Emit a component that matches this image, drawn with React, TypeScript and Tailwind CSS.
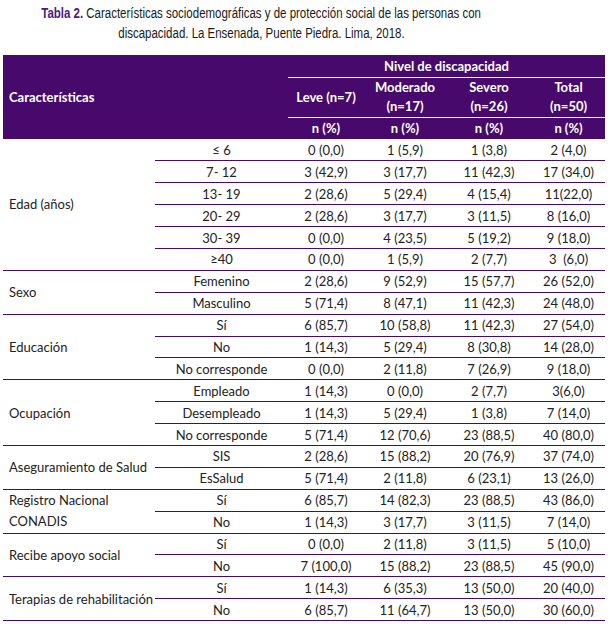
import React from "react";

type Row = { sub: string; vals: string[] };
type Group = { label: string; rows: Row[]; twoLine?: boolean };

const groups: Group[] = [
  {
    label: "Edad (años)",
    rows: [
      { sub: "≤ 6", vals: ["0 (0,0)", "1 (5,9)", "1 (3,8)", "2 (4,0)"] },
      { sub: "7- 12", vals: ["3 (42,9)", "3 (17,7)", "11 (42,3)", "17 (34,0)"] },
      { sub: "13- 19", vals: ["2 (28,6)", "5 (29,4)", "4 (15,4)", "11(22,0)"] },
      { sub: "20- 29", vals: ["2 (28,6)", "3 (17,7)", "3 (11,5)", "8 (16,0)"] },
      { sub: "30- 39", vals: ["0 (0,0)", "4 (23,5)", "5 (19,2)", "9 (18,0)"] },
      { sub: "≥40", vals: ["0 (0,0)", "1 (5,9)", "2 (7,7)", "3  (6,0)"] },
    ],
  },
  {
    label: "Sexo",
    rows: [
      { sub: "Femenino", vals: ["2 (28,6)", "9 (52,9)", "15 (57,7)", "26 (52,0)"] },
      { sub: "Masculino", vals: ["5 (71,4)", "8 (47,1)", "11 (42,3)", "24 (48,0)"] },
    ],
  },
  {
    label: "Educación",
    rows: [
      { sub: "Sí", vals: ["6 (85,7)", "10 (58,8)", "11 (42,3)", "27 (54,0)"] },
      { sub: "No", vals: ["1 (14,3)", "5 (29,4)", "8 (30,8)", "14 (28,0)"] },
      { sub: "No corresponde", vals: ["0 (0,0)", "2 (11,8)", "7 (26,9)", "9 (18,0)"] },
    ],
  },
  {
    label: "Ocupación",
    rows: [
      { sub: "Empleado", vals: ["1 (14,3)", "0 (0,0)", "2 (7,7)", "3(6,0)"] },
      { sub: "Desempleado", vals: ["1 (14,3)", "5 (29,4)", "1 (3,8)", "7 (14,0)"] },
      { sub: "No corresponde", vals: ["5 (71,4)", "12 (70,6)", "23 (88,5)", "40 (80,0)"] },
    ],
  },
  {
    label: "Aseguramiento de Salud",
    rows: [
      { sub: "SIS", vals: ["2 (28,6)", "15 (88,2)", "20 (76,9)", "37 (74,0)"] },
      { sub: "EsSalud", vals: ["5 (71,4)", "2 (11,8)", "6 (23,1)", "13 (26,0)"] },
    ],
  },
  {
    label: "Registro Nacional CONADIS",
    twoLine: true,
    rows: [
      { sub: "Sí", vals: ["6 (85,7)", "14 (82,3)", "23 (88,5)", "43 (86,0)"] },
      { sub: "No", vals: ["1 (14,3)", "3 (17,7)", "3 (11,5)", "7 (14,0)"] },
    ],
  },
  {
    label: "Recibe apoyo social",
    rows: [
      { sub: "Sí", vals: ["0 (0,0)", "2 (11,8)", "3 (11,5)", "5 (10,0)"] },
      { sub: "No", vals: ["7 (100,0)", "15 (88,2)", "23 (88,5)", "45 (90,0)"] },
    ],
  },
  {
    label: "Terapias de rehabilitación",
    rows: [
      { sub: "Sí", vals: ["1 (14,3)", "6 (35,3)", "13 (50,0)", "20 (40,0)"] },
      { sub: "No", vals: ["6 (85,7)", "11 (64,7)", "13 (50,0)", "30 (60,0)"] },
    ],
  },
];

export default function App() {
  return (
    <div className="w-[613px] h-[624px] bg-white overflow-hidden text-[#222]">
      <div
        className="w-[522px] pt-[3px] flex flex-col items-center text-[15.5px] leading-[20px] text-[#1a1a1a]"
        style={{ fontFamily: '"Liberation Sans", Arial, sans-serif' }}
      >
        <div className="whitespace-nowrap scale-x-[0.74] origin-center">
          <span className="font-bold text-[#4b1a7e]">Tabla 2.</span> Características sociodemográficas y de
          protección social de las personas con
        </div>
        <div className="whitespace-nowrap scale-x-[0.74] origin-center">
          discapacidad. La Ensenada, Puente Piedra. Lima, 2018.
        </div>
      </div>
      <div className="pl-[3px] pt-[12px]">
        <table
          className="table-fixed border-collapse w-[602px] text-[13px] leading-[16px]"
          style={{ fontFamily: 'Lato, "Open Sans", sans-serif' }}
        >
          <colgroup>
            <col className="w-[152px]" />
            <col className="w-[133px]" />
            <col className="w-[76px]" />
            <col className="w-[82px]" />
            <col className="w-[86px]" />
            <col className="w-[73px]" />
          </colgroup>
          <thead className="bg-[#48096d] text-white font-bold">
            <tr className="h-[22px]">
              <th colSpan={2} rowSpan={3} className="text-left align-middle pl-[6px] font-bold">
                Características
              </th>
              <th colSpan={4} className="text-center border-b border-white p-0 font-bold">
                Nivel de discapacidad
              </th>
            </tr>
            <tr className="h-[40px]">
              <th className="text-center border-b border-white p-0 font-bold">Leve (n=7)</th>
              <th className="text-center border-b border-white p-0 font-bold leading-[19px]">
                Moderado
                <br />
                (n=17)
              </th>
              <th className="text-center border-b border-white p-0 font-bold leading-[19px]">
                Severo
                <br />
                (n=26)
              </th>
              <th className="text-center border-b border-white p-0 font-bold leading-[19px]">
                Total
                <br />
                (n=50)
              </th>
            </tr>
            <tr className="h-[22px]">
              <th className="text-center p-0 font-bold">n (%)</th>
              <th className="text-center p-0 font-bold">n (%)</th>
              <th className="text-center p-0 font-bold">n (%)</th>
              <th className="text-center p-0 font-bold">n (%)</th>
            </tr>
          </thead>
          <tbody>
            {groups.map((g) =>
              g.rows.map((r, i) => (
                <tr key={g.label + i} className="h-[21.9px]">
                  {i === 0 && (
                    <td
                      rowSpan={g.rows.length}
                      className={
                        "border-b border-[#48096d] pl-[6px] text-left align-middle p-0 " +
                        (g.twoLine ? "leading-[21px]" : "")
                      }
                    >
                      {g.twoLine ? (
                        <>
                          Registro Nacional
                          <br />
                          CONADIS
                        </>
                      ) : (
                        g.label
                      )}
                    </td>
                  )}
                  <td className="border-b border-[#48096d] text-center p-0 whitespace-pre">{r.sub}</td>
                  {r.vals.map((v, j) => (
                    <td key={j} className="border-b border-[#48096d] text-center p-0 whitespace-pre">
                      {v}
                    </td>
                  ))}
                </tr>
              ))
            )}
          </tbody>
        </table>
      </div>
    </div>
  );
}
